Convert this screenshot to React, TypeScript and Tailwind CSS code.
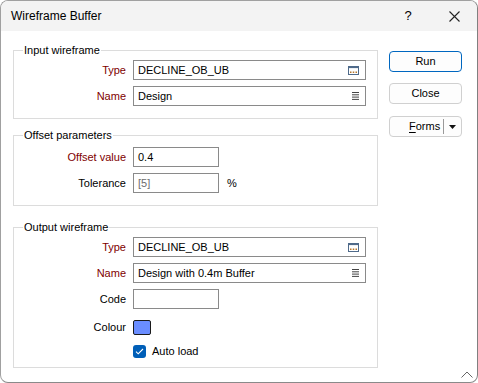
import type { ReactNode } from "react";

const FONT = "font-['Liberation_Sans',Arial,sans-serif]";

function BrowseIcon() {
  return (
    <svg width="11" height="9" viewBox="0 0 11 9" aria-hidden>
      <rect x="0.5" y="0.5" width="10" height="8" fill="#fff" stroke="#4f6a8a" />
      <rect x="0.5" y="0.5" width="10" height="1.6" fill="#4f6a8a" />
      <rect x="2" y="5.5" width="1.5" height="1.5" fill="#b5762a" />
      <rect x="4.75" y="5.5" width="1.5" height="1.5" fill="#b5762a" />
      <rect x="7.5" y="5.5" width="1.5" height="1.5" fill="#b5762a" />
    </svg>
  );
}

function ListIcon() {
  return (
    <svg width="7" height="8" viewBox="0 0 7 8" aria-hidden>
      <path d="M0 0.5h7M0 2.8h7M0 5.1h7M0 7.4h7" stroke="#444" strokeWidth="1" />
    </svg>
  );
}

function Group({ title, className, children }: { title: string; className: string; children: ReactNode }) {
  return (
    <div className={`relative border border-[#dcdcdc] ${className}`}>
      <span className="absolute -top-[8px] left-[9px] bg-white px-[1px] text-[11px] leading-[14px] text-black">
        {title}
      </span>
      {children}
    </div>
  );
}

function Row({ label, red, children, className = "" }: { label: string; red?: boolean; children: ReactNode; className?: string }) {
  return (
    <div className={`flex h-[20px] items-center ${className}`}>
      <div className={`w-[112px] text-right text-[11px] ${red ? "text-[#800000]" : "text-black"}`}>{label}</div>
      <div className="ml-[7px] flex h-full flex-1 items-center">{children}</div>
    </div>
  );
}

function TextBox({ value, icon, width, muted }: { value: string; icon?: ReactNode; width: string; muted?: boolean }) {
  return (
    <div className={`flex h-[20px] items-center border border-[#8a8a8a] bg-white pl-[4px] pr-[6px] ${width}`}>
      <span className={`flex-1 text-[11px] ${muted ? "text-[#6d6d6d]" : "text-black"}`}>{value}</span>
      {icon}
    </div>
  );
}

function Button({ children, focused }: { children: ReactNode; focused?: boolean }) {
  return (
    <div
      className={`flex h-[21px] w-[73px] items-center justify-center rounded-[4px] border bg-[#fdfdfd] text-[11px] text-black ${
        focused ? "border-[#0067c0]" : "border-[#d0d0d0]"
      }`}
    >
      {children}
    </div>
  );
}

export default function App() {
  return (
    <div className={`${FONT} h-[383px] w-[478px] bg-white`}>
      <div className="relative flex h-[383px] w-[478px] flex-col overflow-hidden rounded-[8px] border border-[#a0a0a0] border-r-[#808080] border-b-[#8a8a8a] bg-white">
        <div className="flex h-[30px] items-center bg-[#f3f3f3] pl-[10px]">
          <span className="flex-1 text-[12px] text-black">Wireframe Buffer</span>
          <span className="w-[46px] text-center text-[13px] text-black">?</span>
          <span className="flex w-[46px] items-center justify-center">
            <svg width="11" height="11" viewBox="0 0 11 11" aria-hidden>
              <path d="M0.5 0.5l10 10M10.5 0.5l-10 10" stroke="#222" strokeWidth="1.1" />
            </svg>
          </span>
        </div>

        <div className="flex">
          <div className="ml-[12px] mt-[19px] flex w-[365px] flex-col">
            <Group title="Input wireframe" className="pb-[12px] pt-[9px]">
              <div className="flex flex-col gap-[6px]">
                <Row label="Type" red>
                  <TextBox value="DECLINE_OB_UB" width="w-[233px]" icon={<BrowseIcon />} />
                </Row>
                <Row label="Name" red>
                  <TextBox value="Design" width="w-[233px]" icon={<ListIcon />} />
                </Row>
              </div>
            </Group>

            <Group title="Offset parameters" className="mt-[16px] pb-[12px] pt-[11px]">
              <div className="flex flex-col gap-[6px]">
                <Row label="Offset value" red>
                  <TextBox value="0.4" width="w-[86px]" />
                </Row>
                <Row label="Tolerance">
                  <TextBox value="[5]" width="w-[86px]" muted />
                  <span className="ml-[8px] text-[11px] text-black">%</span>
                </Row>
              </div>
            </Group>

            <Group title="Output wireframe" className="mt-[21px] pb-[6px] pt-[9px]">
              <div className="flex flex-col">
                <Row label="Type" red>
                  <TextBox value="DECLINE_OB_UB" width="w-[233px]" icon={<BrowseIcon />} />
                </Row>
                <Row label="Name" red className="mt-[6px]">
                  <TextBox value="Design with 0.4m Buffer" width="w-[233px]" icon={<ListIcon />} />
                </Row>
                <Row label="Code" className="mt-[6px]">
                  <TextBox value="" width="w-[86px]" />
                </Row>
                <Row label="Colour" className="mt-[8px]">
                  <div className="h-[15px] w-[18px] rounded-[2px] border border-[#1a1a1a] bg-[#6a8dff]" />
                </Row>
                <Row label="" className="mt-[4px]">
                  <div className="flex h-[13px] w-[13px] items-center justify-center rounded-[3px] bg-[#005fb8]">
                    <svg width="9" height="7" viewBox="0 0 9 7" aria-hidden>
                      <path d="M1 3.6l2.2 2.2L8 1" fill="none" stroke="#fff" strokeWidth="1.1" />
                    </svg>
                  </div>
                  <span className="ml-[6px] text-[11px] text-black">Auto load</span>
                </Row>
              </div>
            </Group>
          </div>

          <div className="ml-[11px] mt-[20px] flex flex-col gap-[11px]">
            <Button focused>Run</Button>
            <Button>Close</Button>
            <div className="mt-[1px] flex h-[21px] w-[73px] items-center rounded-[4px] border border-[#d0d0d0] bg-[#fdfdfd] text-[11px] text-black">
              <span className="flex-1 pl-[19px]">
                <span className="underline underline-offset-2">F</span>orms
              </span>
              <span className="h-[15px] w-px bg-[#9a9a9a]" />
              <span className="flex w-[17px] items-center justify-center">
                <svg width="7" height="4" viewBox="0 0 7 4" aria-hidden>
                  <path d="M0 0h7L3.5 4z" fill="#111" />
                </svg>
              </span>
            </div>
          </div>
        </div>

        <svg className="absolute bottom-[4px] right-[4px]" width="12" height="7" viewBox="0 0 12 7" aria-hidden>
          <path d="M0.5 6.5L6 1l5.5 5.5" fill="none" stroke="#666" strokeWidth="1" />
        </svg>
      </div>
    </div>
  );
}
